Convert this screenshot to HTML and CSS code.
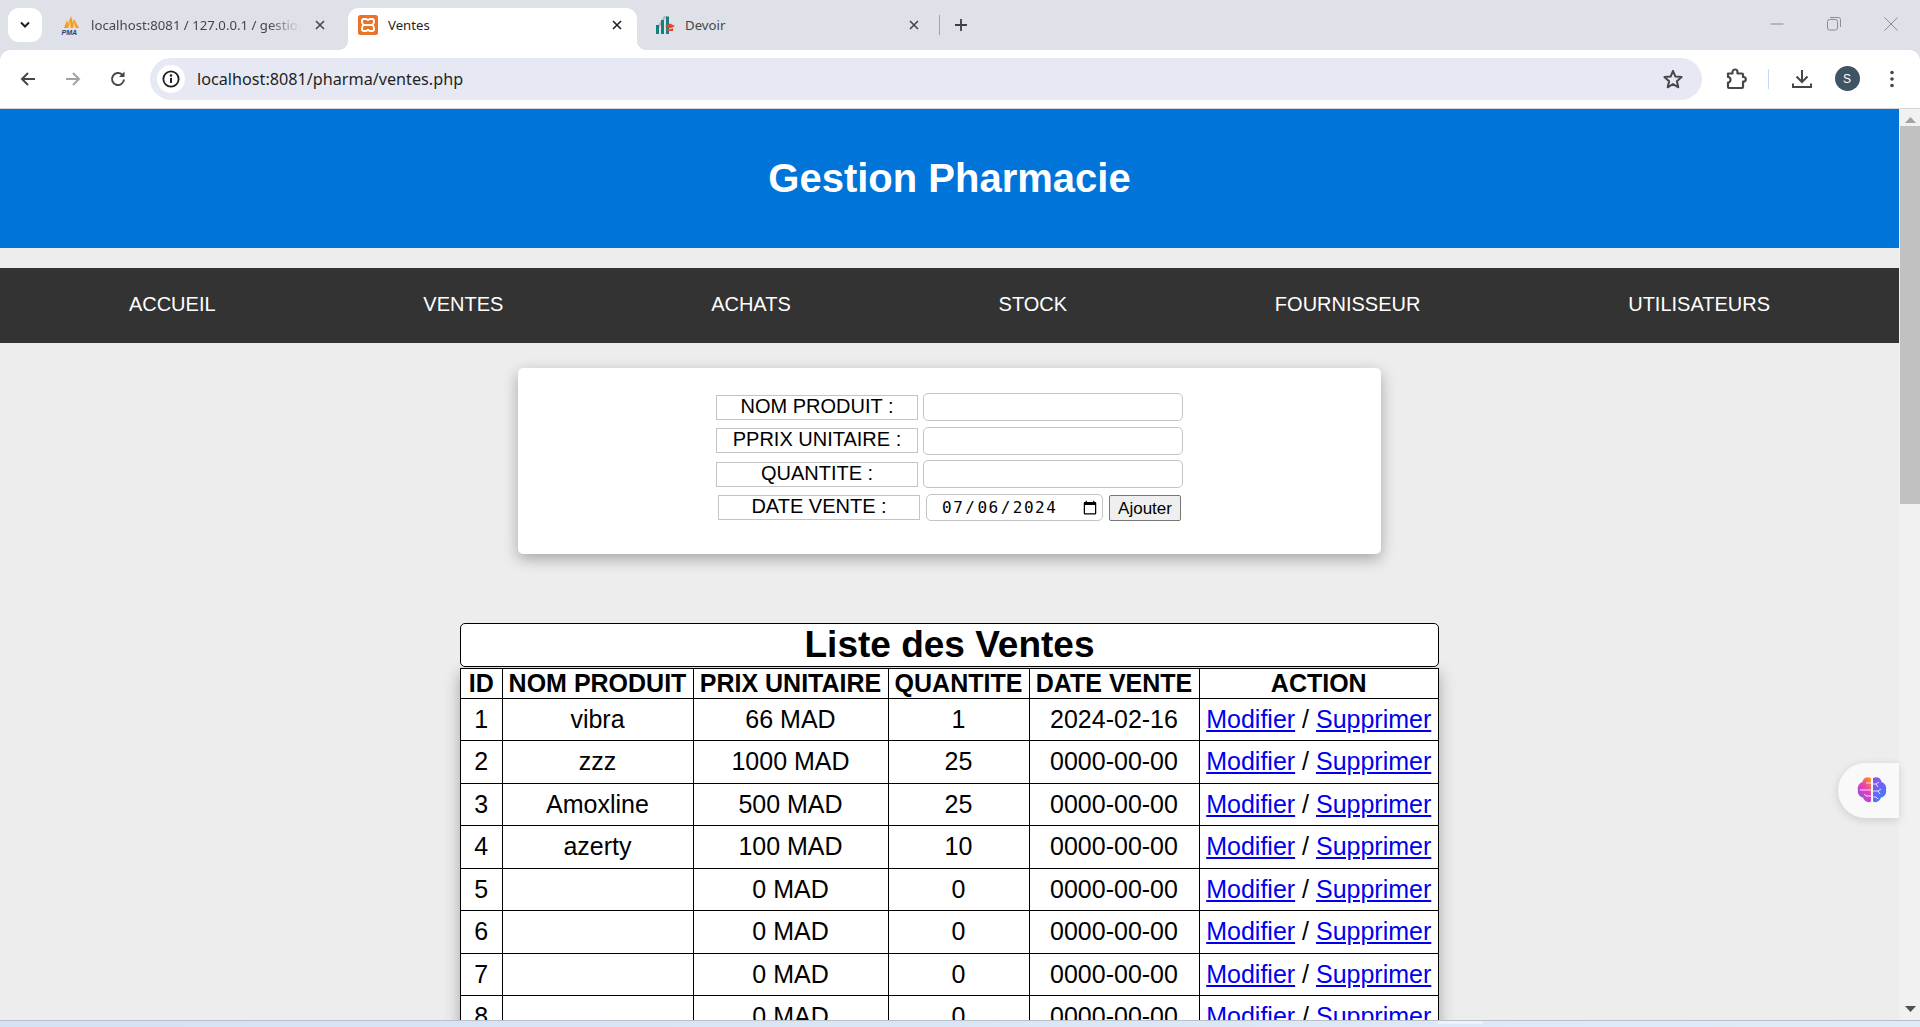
FILE: index.html
```html
<!DOCTYPE html>
<html lang="fr">
<head>
<meta charset="utf-8">
<title>Ventes</title>
<link rel="stylesheet" href="styles.css">
</head>
<body>
<div class="browser">
  <div class="tabbar">
    <div class="tabsearch"><svg width="12" height="8" viewBox="0 0 12 8"><path d="M2 1.500 6 5.500 10 1.500" fill="none" stroke="#1f1f1f" stroke-width="2"/></svg></div>
    <div class="tab">
      <svg class="favicon" viewBox="0 0 20 20"><path d="M3 13 6 5 7 9 10 1 12 8 13 4 18 13Z" fill="#f59a23"/><path d="M7 13 9 6 10 13ZM12 13 13 7 15 13Z" fill="#fbd38a"/><text x="0.500" y="19.500" class="pma">PMA</text></svg>
      <span class="tabtitle fade">localhost:8081 / 127.0.0.1 / gestion_pharma</span>
      <svg class="tabclose" viewBox="0 0 10 10"><path d="M1 1 9 9M9 1 1 9" stroke="#45474a" stroke-width="1.600"/></svg>
    </div>
    <div class="tab active">
      <svg class="favicon" viewBox="0 0 20 20"><rect width="20" height="20" rx="2.500" fill="#e8742a"/><path d="M6 4H8.500Q10 6 11.500 4H14a2 2 0 0 1 2 2v1q0 2-2 3q2 1 2 3v1a2 2 0 0 1-2 2H11.500Q10 14 8.500 16H6a2 2 0 0 1-2-2v-1q0-2 2-3q-2-1-2-3V6a2 2 0 0 1 2-2ZM6.500 10h7" fill="none" stroke="#fff" stroke-width="1.900" stroke-linejoin="round"/></svg>
      <span class="tabtitle">Ventes</span>
      <svg class="tabclose" viewBox="0 0 10 10"><path d="M1 1 9 9M9 1 1 9" stroke="#1f1f1f" stroke-width="1.600"/></svg>
    </div>
    <div class="tab">
      <svg class="favicon" viewBox="0 0 20 20"><path d="M1 13 9 1h3L4 13Z" fill="#b9bcbf"/><path d="M1 19V10h3v9ZM6 19V5h3v14ZM11 19V1.500h3V19Z" fill="#17807e"/><path d="M10 11 15 8.500 20 11 15 13.500Z" fill="#e2452f"/><path d="M12 13v3h6v-3l-3 1.500Z" fill="#e2452f"/></svg>
      <span class="tabtitle">Devoir</span>
      <svg class="tabclose" viewBox="0 0 10 10"><path d="M1 1 9 9M9 1 1 9" stroke="#45474a" stroke-width="1.600"/></svg>
    </div>
    <span class="tabsep"></span>
    <svg class="newtab" viewBox="0 0 14 14"><path d="M7 1v12M1 7h12" stroke="#3c3f43" stroke-width="1.800"/></svg>
    <div class="winctrls">
      <span class="winbtn"><svg width="14" height="14" viewBox="0 0 14 14"><path d="M0.500 7h13" stroke="#8b8d91" stroke-width="1"/></svg></span>
      <span class="winbtn"><svg width="14" height="14" viewBox="0 0 14 14"><rect x="0.500" y="2.500" width="10" height="10.500" rx="2" fill="none" stroke="#8b8d91"/><path d="M3 0.500h8.500a2 2 0 0 1 2 2V10" fill="none" stroke="#8b8d91"/></svg></span>
      <span class="winbtn"><svg width="14" height="14" viewBox="0 0 14 14"><path d="M0.500 0.500 13.500 13.500M13.500 0.500 0.500 13.500" stroke="#8b8d91" stroke-width="1"/></svg></span>
    </div>
  </div>

  <div class="toolbar">
    <span class="tbtn"><svg width="18" height="18" viewBox="0 0 18 18"><path d="M16 9H3M9 3 3 9l6 6" fill="none" stroke="#45474a" stroke-width="2"/></svg></span>
    <span class="tbtn"><svg width="18" height="18" viewBox="0 0 18 18"><path d="M2 9h13M9 3l6 6-6 6" fill="none" stroke="#a0a2a6" stroke-width="2"/></svg></span>
    <span class="tbtn"><svg width="18" height="18" viewBox="0 0 18 18"><path d="M15 9.500A6 6 0 1 1 13.200 4.700" fill="none" stroke="#45474a" stroke-width="2"/><path d="M15.500 1.500V7H10Z" fill="#45474a"/></svg></span>
    <div class="omnibox">
      <span class="siteinfo"><svg width="18" height="18" viewBox="0 0 16 16"><circle cx="8" cy="8" r="6.800" fill="none" stroke="#1f1f1f" stroke-width="1.600"/><path d="M8 7v4.500" stroke="#1f1f1f" stroke-width="1.800"/><circle cx="8" cy="4.800" r="1.100" fill="#1f1f1f"/></svg></span>
      <span class="url">localhost:8081/pharma/ventes.php</span>
      <svg class="star" width="22" height="22" viewBox="0 0 22 22"><path d="M11 2.800 13.400 8.600 19.600 9.100 14.900 13.200 16.300 19.300 11 16 5.700 19.300 7.100 13.200 2.400 9.100 8.600 8.600Z" fill="none" stroke="#45474a" stroke-width="2" stroke-linejoin="round"/></svg>
    </div>
    <span class="tbtn ext"><svg width="22" height="22" viewBox="0 0 22 22"><path d="M3 5.500h4.500V4a2.500 2.500 0 0 1 5 0V5.500H17a1 1 0 0 1 1 1V9h.5a2.300 2.300 0 0 1 0 4.600H18V19a1 1 0 0 1-1 1H4a1 1 0 0 1-1-1V14.500h.8a3 3 0 0 0 0-5.500H3Z" fill="none" stroke="#45474a" stroke-width="2.200" stroke-linejoin="round"/></svg></span>
    <span class="tbsep"></span>
    <span class="tbtn dl"><svg width="22" height="22" viewBox="0 0 22 22"><path d="M11 2v11M5.500 8.500 11 14l5.500-5.500M2 15.500V19h18v-3.500" fill="none" stroke="#45474a" stroke-width="2"/></svg></span>
    <span class="tbtn av"><span class="avatar">S</span></span>
    <span class="tbtn"><svg width="6" height="18" viewBox="0 0 6 18"><circle cx="3" cy="2.500" r="1.800" fill="#45474a"/><circle cx="3" cy="9" r="1.800" fill="#45474a"/><circle cx="3" cy="15.500" r="1.800" fill="#45474a"/></svg></span>
  </div>

  <div class="viewport">
    <div class="page">
      <header class="site-header"><h1>Gestion Pharmacie</h1></header>
      <nav class="site-nav">
        <a href="#">ACCUEIL</a>
        <a href="#">VENTES</a>
        <a href="#">ACHATS</a>
        <a href="#">STOCK</a>
        <a href="#">FOURNISSEUR</a>
        <a href="#">UTILISATEURS</a>
      </nav>
      <form class="card">
        <div class="frow"><label class="flabel">NOM PRODUIT :</label><input class="finput" type="text"></div>
        <div class="frow"><label class="flabel">PPRIX UNITAIRE :</label><input class="finput" type="text"></div>
        <div class="frow"><label class="flabel">QUANTITE :</label><input class="finput" type="text"></div>
        <div class="frow frow-date"><label class="flabel">DATE VENTE :</label><input class="fdate" type="date" value="2024-07-06"><button class="fbtn" type="button">Ajouter</button></div>
      </form>
      <table class="ventes">
        <caption>Liste des Ventes</caption>
        <colgroup><col class="c1"><col class="c2"><col class="c3"><col class="c4"><col class="c5"><col class="c6"></colgroup>
        <thead><tr><th>ID</th><th>NOM PRODUIT</th><th>PRIX UNITAIRE</th><th>QUANTITE</th><th>DATE VENTE</th><th>ACTION</th></tr></thead>
        <tbody>
          <tr><td>1</td><td>vibra</td><td>66 MAD</td><td>1</td><td>2024-02-16</td><td><a href="#">Modifier</a> / <a href="#">Supprimer</a></td></tr>
          <tr><td>2</td><td>zzz</td><td>1000 MAD</td><td>25</td><td>0000-00-00</td><td><a href="#">Modifier</a> / <a href="#">Supprimer</a></td></tr>
          <tr><td>3</td><td>Amoxline</td><td>500 MAD</td><td>25</td><td>0000-00-00</td><td><a href="#">Modifier</a> / <a href="#">Supprimer</a></td></tr>
          <tr><td>4</td><td>azerty</td><td>100 MAD</td><td>10</td><td>0000-00-00</td><td><a href="#">Modifier</a> / <a href="#">Supprimer</a></td></tr>
          <tr><td>5</td><td></td><td>0 MAD</td><td>0</td><td>0000-00-00</td><td><a href="#">Modifier</a> / <a href="#">Supprimer</a></td></tr>
          <tr><td>6</td><td></td><td>0 MAD</td><td>0</td><td>0000-00-00</td><td><a href="#">Modifier</a> / <a href="#">Supprimer</a></td></tr>
          <tr><td>7</td><td></td><td>0 MAD</td><td>0</td><td>0000-00-00</td><td><a href="#">Modifier</a> / <a href="#">Supprimer</a></td></tr>
          <tr><td>8</td><td></td><td>0 MAD</td><td>0</td><td>0000-00-00</td><td><a href="#">Modifier</a> / <a href="#">Supprimer</a></td></tr>
        </tbody>
      </table>
    </div>
    <div class="scrollbar">
      <svg class="sarrow" width="11" height="6" viewBox="0 0 11 6"><path d="M5.500 0 11 6H0Z" fill="#a3a3a3"/></svg>
      <div class="strack"><div class="sthumb"></div></div>
      <svg class="sarrow" width="11" height="6" viewBox="0 0 11 6"><path d="M0 0H11L5.500 6Z" fill="#505050"/></svg>
    </div>
    <div class="widget">
      <svg width="30" height="28" viewBox="0 0 30 28">
        <defs>
          <linearGradient id="gl" x1="0.800" y1="0" x2="0.200" y2="1"><stop offset="0" stop-color="#fb8f24"/><stop offset="0.400" stop-color="#ee3fb0"/><stop offset="1" stop-color="#8a4cf5"/></linearGradient>
          <linearGradient id="gr" x1="0" y1="0" x2="0.600" y2="1"><stop offset="0" stop-color="#9a4cf0"/><stop offset="1" stop-color="#3f7cf8"/></linearGradient>
        </defs>
        <path d="M14 2C10 0 6 2 5.500 6 2 7 0 11 1 14c-1 4 2 7 5 7.500C7 25 11 27.500 14 25.500Z" fill="url(#gl)"/>
        <path d="M16 2c4-2 8 0 8.500 4C28 7 30 11 29 14c1 4-2 7-5 7.500C23 25 19 27.500 16 25.500Z" fill="url(#gr)"/>
        <path d="M14 7H9M14 14H3M14 20H9L7 18" fill="none" stroke="#fff" stroke-width="1" opacity=".8"/>
        <path d="M16 8h3l3-2M19 8l2 3M16 15h5l3-2M21 15l2 3M16 21h3l2 2" fill="none" stroke="#fff" stroke-width="1" opacity=".8"/>
      </svg>
    </div>
  </div>
  <div class="taskbar"><span class="taskchip"></span></div>
</div>
</body>
</html>
```
FILE: styles.css
```css
* { box-sizing: border-box; }
html, body { margin: 0; height: 100%; overflow: hidden; }
body { font-family: "Liberation Sans", Arial, sans-serif; }
.browser { display: flex; flex-direction: column; height: 1027px; background: #dee1e8; }

/* tab strip */
.tabbar { display: flex; align-items: flex-end; height: 50px; flex: none; padding-left: 8px; font-family: "Noto Sans", sans-serif; font-size: 13.2px; color: #45474a; }
.tabsearch { width: 34px; height: 34px; margin: 0 9px 8px 0; background: #fff; border-radius: 11px; display: flex; align-items: center; justify-content: center; }
.tab { position: relative; display: flex; align-items: center; width: 289px; height: 42px; margin-right: 8px; padding: 0 15px 8px 10px; border-radius: 11px 11px 0 0; }
.tab.active { background: #fff; color: #1f1f1f; }
.tab.active::before, .tab.active::after { content: ""; position: absolute; bottom: 0; width: 10px; height: 10px; }
.tab.active::before { left: -10px; background: radial-gradient(circle at 0 0, transparent 10px, #fff 10.5px); }
.tab.active::after { right: -10px; background: radial-gradient(circle at 100% 0, transparent 10px, #fff 10.5px); }
.favicon { width: 20px; height: 20px; flex: none; margin-right: 10px; }
.pma { font: italic bold 7px "Liberation Sans", sans-serif; fill: #24407a; }
.tabtitle { flex: 1; min-width: 0; white-space: nowrap; overflow: hidden; }
.fade { -webkit-mask-image: linear-gradient(90deg, #000 85%, transparent 100%); mask-image: linear-gradient(90deg, #000 85%, transparent 100%); margin-right: 15px; }
.tabclose { width: 10px; height: 10px; flex: none; }
.tabsep { width: 1px; height: 20px; margin: 0 0 15px -3px; background: #a3a5a8; }
.newtab { width: 14px; height: 14px; margin: 0 0 18px 14px; flex: none; }
.winctrls { margin-left: auto; display: flex; align-self: flex-start; padding: 17px 1px 0 0; }
.winbtn { width: 57px; display: flex; justify-content: center; }

/* toolbar */
.toolbar { display: flex; align-items: center; height: 59px; flex: none; padding: 0 5px 1px 5px; background: #fff; border-bottom: 1px solid #d3d5d9; border-radius: 11px 11px 0 0; }
.tbtn { width: 45px; height: 36px; flex: none; display: flex; align-items: center; justify-content: center; }
.omnibox { display: flex; align-items: center; height: 42px; width: 1552px; margin-left: 10px; padding-left: 7px; background: #e6e9f3; border-radius: 21px; font-family: "Noto Sans", sans-serif; font-size: 16.2px; color: #1f1f1f; }
.siteinfo { width: 28px; height: 28px; flex: none; border-radius: 50%; background: #fff; display: flex; align-items: center; justify-content: center; }
.url { margin-left: 12px; flex: 1; }
.star { margin-right: 18px; flex: none; }
.ext { margin-left: 12px; width: 44px; }
.tbsep { width: 1px; height: 20px; margin-left: 10px; background: #c9d9f2; flex: none; }
.dl { width: 44px; margin-left: 11px; }
.av { width: 44px; margin-left: 1px; }
.avatar { width: 25px; height: 25px; border-radius: 50%; background: #3f5564; color: #fff; font-size: 12px; display: flex; align-items: center; justify-content: center; }

/* viewport */
.viewport { position: relative; flex: 1; min-height: 0; display: flex; overflow: hidden; background: #ededed; }
.page { flex: 1; min-width: 0; overflow: hidden; }
.scrollbar { width: 21px; flex: none; display: flex; flex-direction: column; align-items: center; padding: 8px 0; background: #f1f1f1; }
.sarrow { flex: none; margin-left: 1px; }
.strack { flex: 1; width: 100%; padding: 3px 0 0 1px; }
.sthumb { height: 378px; background: #c1c1c1; }
.widget { position: absolute; right: 21px; top: 654px; width: 61px; height: 55px; padding: 13px 0 0 19px; background: #f9f9f9; border-radius: 28px 0 0 28px; box-shadow: 0 2px 10px rgba(0,0,0,.14); }

/* page */
.site-header { height: 139px; margin-bottom: 20px; background: #0074d9; display: flex; align-items: center; justify-content: center; }
.site-header h1 { margin: 0; color: #fff; font-size: 40px; font-weight: 700; }
.site-nav { height: 75px; padding: 0 25px 2px; background: #333; display: flex; align-items: center; justify-content: space-around; }
.site-nav a { color: #fff; font-size: 20px; text-decoration: none; }
.card { width: 863px; height: 186px; margin: 25px auto 69px; padding-top: 25px; background: #fff; border-radius: 5px; box-shadow: 0 5px 15px rgba(0,0,0,.3); display: flex; flex-direction: column; gap: 5.5px; }
.frow { height: 28px; display: flex; align-items: center; justify-content: center; gap: 5px; }
.frow-date { gap: 6px; }
.flabel { width: 202px; height: 25px; border: 1px solid #c4c4c4; font-size: 20px; line-height: 20px; text-align: center; color: #000; }
.finput { width: 260px; height: 28px; border: 1px solid #c4c4c4; border-radius: 5px; background: #fff; }
.fdate { width: 177px; height: 27px; padding: 0 2px 0 14px; border: 1px solid #c4c4c4; border-radius: 5px; background: #fff; font-family: "DejaVu Sans Mono", monospace; font-size: 16px; letter-spacing: 1.5px; color: #000; }
.fbtn { width: 72px; height: 26px; padding: 2px 0 0; border: 1px solid #767676; border-radius: 2px; background: #efefef; font-family: "Liberation Sans", sans-serif; font-size: 17px; color: #000; }

/* table */
.ventes { width: 978px; margin: 0 auto; border-collapse: collapse; table-layout: fixed; background: #fff; box-shadow: 0 5px 15px rgba(0,0,0,.3); font-size: 25px; color: #000; }
.ventes caption { height: 44px; border: 1px solid #000; border-radius: 5px; background: #fff; font-size: 37px; font-weight: 700; line-height: 42px; margin-bottom: 1px; }
.c1 { width: 41.5px; } .c2 { width: 191px; } .c3 { width: 195px; } .c4 { width: 141px; } .c5 { width: 170px; } .c6 { width: 239.5px; }
.ventes th, .ventes td { border: 1px solid #000; padding: 0; text-align: center; white-space: nowrap; overflow: hidden; }
.ventes th { height: 29.5px; line-height: 28px; }
.ventes td { height: 42.5px; }
.ventes a { color: #00e; }

/* OS strip */
.taskbar { height: 7px; flex: none; border-top: 1px solid #b9c0c9; background: linear-gradient(90deg, #d5e2f4, #e0ebf8); display: flex; justify-content: center; padding-left: 1000px; }
.taskchip { width: 45px; height: 3px; background: #eef3fa; }
```
